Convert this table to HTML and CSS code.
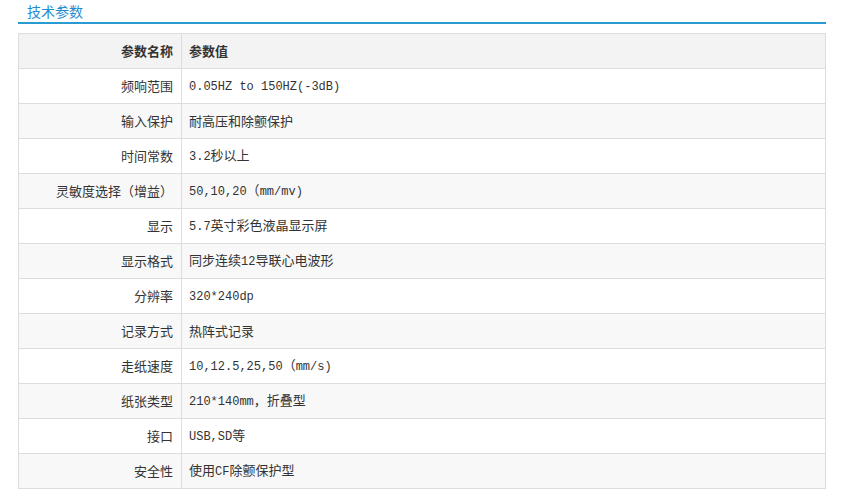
FILE: index.html
```html
<!DOCTYPE html>
<html lang="zh-CN">
<head>
<meta charset="utf-8">
<title>技术参数</title>
<link rel="stylesheet" href="styles.css">
</head>
<body>
<div class="wrap">
  <div class="title"><span class="title-text">技术参数</span></div>
  <table class="params">
    <thead>
      <tr><th class="k">参数名称</th><th class="v">参数值</th></tr>
    </thead>
    <tbody>
      <tr><td class="k">频响范围</td><td class="v"><span class="lat">0.05HZ to 150HZ(-3dB)</span></td></tr>
      <tr><td class="k">输入保护</td><td class="v">耐高压和除颤保护</td></tr>
      <tr><td class="k">时间常数</td><td class="v"><span class="lat">3.2</span>秒以上</td></tr>
      <tr><td class="k">灵敏度选择（增益）</td><td class="v"><span class="lat">50,10,20</span>（<span class="lat">mm/mv)</span></td></tr>
      <tr><td class="k">显示</td><td class="v"><span class="lat">5.7</span>英寸彩色液晶显示屏</td></tr>
      <tr><td class="k">显示格式</td><td class="v">同步连续<span class="lat">12</span>导联心电波形</td></tr>
      <tr><td class="k">分辨率</td><td class="v"><span class="lat">320*240dp</span></td></tr>
      <tr><td class="k">记录方式</td><td class="v">热阵式记录</td></tr>
      <tr><td class="k">走纸速度</td><td class="v"><span class="lat">10,12.5,25,50</span>（<span class="lat">mm/s)</span></td></tr>
      <tr><td class="k">纸张类型</td><td class="v"><span class="lat">210*140mm</span>，折叠型</td></tr>
      <tr><td class="k">接口</td><td class="v"><span class="lat">USB,SD</span>等</td></tr>
      <tr><td class="k">安全性</td><td class="v">使用<span class="lat">CF</span>除颤保护型</td></tr>
    </tbody>
  </table>
</div>
</body>
</html>
```
FILE: styles.css
```css
html, body {
  margin: 0;
  padding: 0;
  background: #fff;
}
body {
  font-family: "Noto Sans CJK SC", "Noto Sans", sans-serif;
  font-size: 13px;
  color: #333;
}
.wrap {
  width: 808px;
  margin-left: 18px;
}
.title {
  height: 22px;
  border-bottom: 2px solid #2a9bd2;
  padding-left: 9px;
  box-sizing: content-box;
}
.title-text {
  display: block;
  font-size: 14px;
  line-height: 22px;
  color: #1f8ecf;
}
.params {
  margin-top: 9px;
  width: 808px;
  border-collapse: collapse;
  border: 1px solid #ddd;
}
.params th,
.params td {
  height: 34px;
  padding: 0;
  border: 1px solid #ddd;
  line-height: 18px;
  vertical-align: middle;
}
.params .k {
  width: 154px;
  text-align: right;
  padding-right: 8px;
}
.params .v {
  text-align: left;
  padding-left: 7px;
}
.lat {
  font-family: "Liberation Mono", "DejaVu Sans Mono", monospace;
  font-size: 12px;
}
.params thead tr {
  background: #f3f3f3;
}
.params th {
  font-weight: bold;
}
.params tbody tr:nth-child(even) {
  background: #f8f8f8;
}
```
